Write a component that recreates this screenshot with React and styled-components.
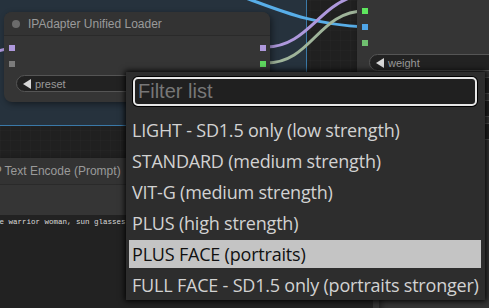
import React from 'react';
import styled, { createGlobalStyle } from 'styled-components';

const GlobalStyle = createGlobalStyle`
  html, body {
    margin: 0;
    padding: 0;
    background: #1f1f1f;
  }
  * { box-sizing: border-box; }
`;

const presets = [
  'LIGHT - SD1.5 only (low strength)',
  'STANDARD (medium strength)',
  'VIT-G (medium strength)',
  'PLUS (high strength)',
  'PLUS FACE (portraits)',
  'FULL FACE - SD1.5 only (portraits stronger)',
];

const App = () => {
  return (
    <>
      <GlobalStyle />
      <Canvas>
        <Group />
        <Wires width="489" height="308">
          <path d="M 222 -10 C 268 4, 300 24, 365 27" stroke="#58aee8" />
          <path d="M 266 47 C 305 47, 318 8, 352 -3" stroke="#ae98dc" />
          <path d="M 266 63 C 312 63, 318 11, 365 11" stroke="#9fb49a" />
          <path d="M -6 52 L 10 48" stroke="#ae98dc" />
          <path d="M 352 310 L 359 299" stroke="#d66ad0" />
        </Wires>

        <Node $x={4} $y={12} $w={266}>
          <TitleBar>
            <Dot />
            <Title>IPAdapter Unified Loader</Title>
          </TitleBar>
          <Body>
            <SlotRow>
              <Slot $c="#ae98dc" />
              <Slot $c="#ae98dc" />
            </SlotRow>
            <SlotRow>
              <Slot $c="#7c7c7c" />
              <Slot $c="#5ed65e" />
            </SlotRow>
            <Widget>
              <Arrow />
              preset
            </Widget>
          </Body>
        </Node>

        <Node $x={357} $y={-6} $w={160} $h={320}>
          <Body $top={9}>
            <SlotRow><Slot $c="#5ee65e" /></SlotRow>
            <SlotRow><Slot $c="#4fa6e8" /></SlotRow>
            <SlotRow><Slot $c="#6fbf6f" /></SlotRow>
            <Widget>
              <Arrow />
              weight
            </Widget>
            <Widget />
            <Widget />
            <Widget />
          </Body>
        </Node>

        <Node $x={-41} $y={158} $w={420} $h={170}>
          <TitleBar $h={27}>
            <Title $pad={8}>CLIP Text Encode (Prompt)</Title>
          </TitleBar>
          <Spacer />
          <TextArea>sine warrior woman, sun glasses</TextArea>
        </Node>

        <Menu>
          <Filter placeholder="Filter list" />
          <Entries>
            {presets.map((p) => (
              <Entry key={p} $active={p === 'PLUS FACE (portraits)'}>
                {p}
              </Entry>
            ))}
          </Entries>
        </Menu>
      </Canvas>
    </>
  );
};

const Canvas = styled.div`
  position: relative;
  width: 489px;
  height: 308px;
  overflow: hidden;
  background-color: #202020;
  background-image:
    linear-gradient(90deg, rgba(255,255,255,0.015) 1px, transparent 1px),
    linear-gradient(rgba(255,255,255,0.015) 1px, transparent 1px);
  background-size: 10px 10px;
  font-family: "Liberation Sans", Arial, sans-serif;
`;

const Group = styled.div`
  position: absolute;
  left: -20px;
  top: -20px;
  width: 327px;
  height: 146px;
  background: #26323d;
  border-right: 1px solid #3a79a8;
  border-bottom: 1px solid #3a79a8;
`;

const Wires = styled.svg`
  position: absolute;
  left: 0;
  top: 0;
  overflow: visible;

  path {
    fill: none;
    stroke-width: 3;
  }
`;

const Node = styled.div`
  position: absolute;
  left: ${(p) => p.$x}px;
  top: ${(p) => p.$y}px;
  width: ${(p) => p.$w}px;
  height: ${(p) => (p.$h ? `${p.$h}px` : 'auto')};
  padding-bottom: 7px;
  display: flex;
  flex-direction: column;
  background: #353535;
  border-radius: 8px;
  box-shadow: 2px 2px 6px rgba(0, 0, 0, 0.45);
`;

const TitleBar = styled.div`
  height: ${(p) => p.$h || 24}px;
  display: flex;
  align-items: center;
  gap: 8px;
  padding-left: 8px;
  background: #333;
  border-radius: 8px 8px 0 0;
  border-bottom: 1px solid #2a2a2a;
`;

const Dot = styled.span`
  width: 8px;
  height: 8px;
  border-radius: 50%;
  background: #6b6b6b;
`;

const Title = styled.span`
  padding-left: ${(p) => p.$pad || 0}px;
  font-size: 12px;
  color: #9a9a9a;
  white-space: nowrap;
`;

const Body = styled.div`
  display: flex;
  flex-direction: column;
  padding: ${(p) => p.$top || 4}px 4px 0 5px;
`;

const SlotRow = styled.div`
  height: 16px;
  display: flex;
  align-items: center;
  justify-content: space-between;
`;

const Slot = styled.span`
  width: 6px;
  height: 6px;
  background: ${(p) => p.$c};
`;

const Widget = styled.div`
  height: 17px;
  margin: 3px 7px 3px 7px;
  display: flex;
  align-items: center;
  gap: 4px;
  padding-left: 6px;
  background: #222;
  border: 1px solid #555;
  border-radius: 9px;
  font-size: 11px;
  color: #9a9a9a;
`;

const Arrow = styled.span`
  width: 0;
  height: 0;
  border-top: 5px solid transparent;
  border-bottom: 5px solid transparent;
  border-right: 8px solid #d8d8d8;
`;

const Spacer = styled.div`
  height: 30px;
`;

const TextArea = styled.div`
  flex: 1;
  margin: 0 6px;
  padding: 3px 0 0 21px;
  background: #222;
  font-family: "Liberation Mono", "DejaVu Sans Mono", monospace;
  font-size: 7.5px;
  color: #d8d8d8;
  white-space: nowrap;
  overflow: hidden;
`;

const Menu = styled.div`
  position: absolute;
  left: 126px;
  top: 72px;
  width: 359px;
  height: 228px;
  padding: 5px 4px 0 3px;
  display: flex;
  flex-direction: column;
  background: #2d2d2d;
  box-shadow: 0 0 6px 1px #000;
`;

const Filter = styled.input`
  height: 29px;
  margin: 0 4px 0 4px;
  padding: 0 3px;
  background: #202020;
  border: 2px solid #e6e6e6;
  border-radius: 5px;
  box-shadow: 0 0 0 1px #000;
  outline: none;
  font-family: "Liberation Sans", Arial, sans-serif;
  font-size: 20px;
  color: #ddd;

  &::placeholder {
    color: #777;
  }
`;

const Entries = styled.div`
  margin-top: 10px;
  display: flex;
  flex-direction: column;
  gap: 3px;
`;

const Entry = styled.div`
  height: 28px;
  line-height: 28px;
  padding-left: 3px;
  font-family: "Open Sans", "Noto Sans", sans-serif;
  font-size: 18px;
  letter-spacing: -0.2px;
  white-space: nowrap;
  color: ${(p) => (p.$active ? '#111' : '#d2d2d2')};
  background: ${(p) => (p.$active ? '#c4c4c4' : 'transparent')};
`;

export default App;
